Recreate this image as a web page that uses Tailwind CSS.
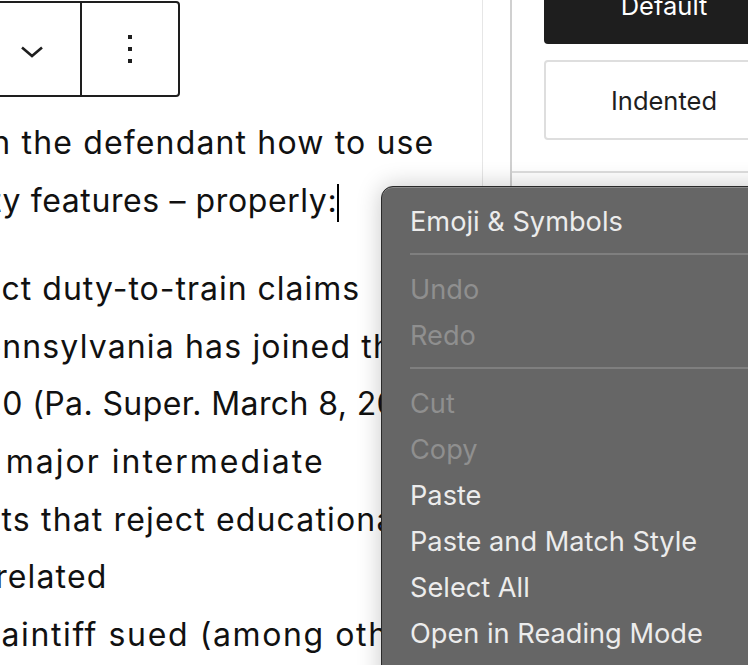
<!DOCTYPE html>
<html lang="en">

<head>
  <meta charset="UTF-8">
  <meta name="viewport" content="width=device-width, initial-scale=1.0">
  <script src="https://cdn.jsdelivr.net/npm/@tailwindcss/browser@4"></script>
  <title>Editor</title>
</head>

<body class="bg-white">
  <div class="relative flex w-[748px] h-[665px] overflow-hidden bg-white">

    <!-- editor column -->
    <main class="w-[483px] shrink-0 border-r border-[#e6e6e6] overflow-hidden">
      <div class="flex h-[96px] w-[184px] mt-px -ml-[4px] border-2 border-[#1e1e1e] rounded-r-[4px]">
        <div class="w-[84px] shrink-0 flex items-center justify-center border-r-2 border-[#1e1e1e]">
          <svg width="22" height="12" viewBox="0 0 22 12" fill="none" stroke="#1e1e1e" stroke-width="2.6" class="-ml-[14px] mt-[5px]">
            <path d="M1 1.5 L11 10 L21 1.5" />
          </svg>
        </div>
        <div class="flex-1 flex flex-col items-center justify-center gap-2">
          <span class="block w-1 h-1 bg-[#1e1e1e]"></span>
          <span class="block w-1 h-1 bg-[#1e1e1e]"></span>
          <span class="block w-1 h-1 bg-[#1e1e1e]"></span>
        </div>
      </div>

      <div class="mt-[17px] font-['Inter',sans-serif] text-[32px] leading-[57.6px] tracking-[1.15px] text-[#111] whitespace-nowrap">
        <p class="-ml-[29px]">on the defendant how to use</p>
        <p class="-ml-[76px] mb-[31px] tracking-[0.6px]">
          safety features – properly:<span class="inline-block w-[2px] h-[38px] bg-black align-middle"></span>
        </p>
        <p class="-ml-[59px] tracking-[1px]">reject duty-to-train claims</p>
        <p class="-ml-[39px]">Pennsylvania has joined the</p>
        <p class="-ml-[38px] tracking-[0.4px]">920 (Pa. Super. March 8, 2020)</p>
        <p class="-ml-[46px] tracking-[2px]">its major intermediate</p>
        <p class="-ml-[72px]">courts that reject educational</p>
        <p class="-ml-[45px]">unrelated</p>
        <p class="-ml-[29px] tracking-[1.6px]">plaintiff sued (among others)</p>
      </div>
    </main>

    <!-- settings sidebar -->
    <aside class="flex-1 ml-[27px] border-l-2 border-[#d0d0d0] overflow-hidden font-['Inter',sans-serif] text-[25.5px]">
      <div class="pl-[32px] h-[173px] border-b-2 border-[#dedede]">
        <div class="w-[240px] h-[44px] flex items-end justify-center bg-[#1e1e1e] rounded-b-[4px] text-white leading-none">
          <span class="pb-[26px]">Default</span>
        </div>
        <div class="w-[240px] h-[80px] mt-4 pt-[3px] flex items-center justify-center border-2 border-[#dedede] rounded-[4px] text-[#1e1e1e]">Indented</div>
      </div>
    </aside>

    <!-- context menu -->
    <div class="absolute left-[381px] top-[186px] w-[420px] h-[520px] pt-[10px] pl-[28px] bg-[#666666] border border-[#2a2a2a] rounded-[12px] shadow-[inset_0_1px_0_#8a8a8a,0_0_24px_rgba(0,0,0,0.22)] font-['Inter',sans-serif] text-[27.2px] text-[#ececec]">
      <div class="h-[46px] leading-[49px]">Emoji &amp; Symbols</div>
      <div class="h-[2px] my-[10px] bg-[#7f7f7f]"></div>
      <div class="h-[46px] leading-[49px] text-[#8f8f8f]">Undo</div>
      <div class="h-[46px] leading-[49px] text-[#8f8f8f]">Redo</div>
      <div class="h-[2px] my-[10px] bg-[#7f7f7f]"></div>
      <div class="h-[46px] leading-[49px] text-[#8f8f8f]">Cut</div>
      <div class="h-[46px] leading-[49px] text-[#8f8f8f]">Copy</div>
      <div class="h-[46px] leading-[49px]">Paste</div>
      <div class="h-[46px] leading-[49px]">Paste and Match Style</div>
      <div class="h-[46px] leading-[49px]">Select All</div>
      <div class="h-[46px] leading-[49px]">Open in Reading Mode</div>
    </div>
  </div>
</body>

</html>
